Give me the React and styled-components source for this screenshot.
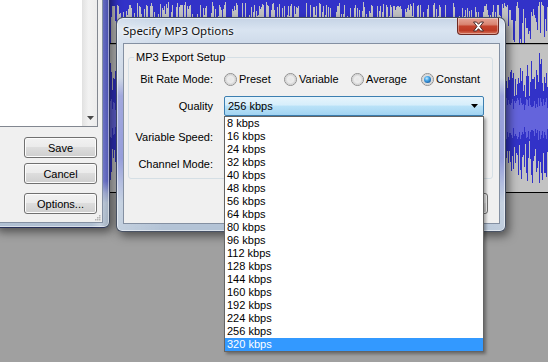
import React from 'react';
import styled, { createGlobalStyle } from 'styled-components';

const GlobalStyle = createGlobalStyle`
  html, body { margin: 0; padding: 0; }
  body {
    background: #a0a0a0;
    font-family: "Liberation Sans", Arial, sans-serif;
    font-size: 11px;
    color: #000;
  }
  * { box-sizing: border-box; }
`;

// small seeded random so the wave looks the same every run
const rng = (seed) => {
  let a = seed;
  return () => {
    a = (a + 0x6d2b79f5) | 0;
    let t = Math.imul(a ^ (a >>> 15), 1 | a);
    t = (t + Math.imul(t ^ (t >>> 7), 61 | t)) ^ t;
    return ((t ^ (t >>> 14)) >>> 0) / 4294967296;
  };
};

const makeTail = (w, h) => {
  const r = rng(11);
  let d = '';
  for (let x = 0; x < w; x++) {
    const len = r() < 0.12 ? 2 + r() * 4 : 5 + Math.pow(r(), 1.6) * (h - 3);
    d += `M${x + 0.5} 0V${len.toFixed(1)}`;
  }
  return d;
};

const makeWave = (w, h) => {
  const r = rng(29);
  const c = h / 2;
  let peak = '';
  let rms = '';
  for (let x = 0; x < w; x++) {
    const amp = 30 + 40 * Math.pow(r(), 0.55);
    const up = amp * (0.55 + 0.45 * r());
    const down = amp * (0.55 + 0.45 * r());
    const band = 8 + 13 * r();
    peak += `M${x + 0.5} ${(c - up).toFixed(1)}V${(c + down).toFixed(1)}`;
    rms += `M${x + 0.5} ${(c - band).toFixed(1)}V${(c + band).toFixed(1)}`;
  }
  return { peak, rms };
};

const TAIL = makeTail(548, 43);
const WAVE = makeWave(548, 147);

const RATES = [8, 16, 24, 32, 40, 48, 56, 64, 80, 96, 112, 128, 144, 160, 192, 224, 256, 320];

const Desktop = styled.div`
  position: relative;
  width: 548px;
  height: 362px;
  overflow: hidden;
  background: #a0a0a0;
`;

const TrackPanel = styled.div`
  display: flex;
  flex-direction: column;
  gap: 1px;
`;

const Track = styled.div`
  height: ${(p) => p.$h}px;
  background: #c2c2c2;
  border-bottom: 1px solid #000;
  svg { display: block; }
`;

const Frame = styled.div`
  position: absolute;
  left: ${(p) => p.$x}px;
  top: ${(p) => p.$y}px;
  width: ${(p) => p.$w}px;
  height: ${(p) => p.$h}px;
  display: flex;
  flex-direction: column;
  padding: ${(p) => p.$pad};
  border: 1px solid rgba(28, 38, 56, 0.75);
  border-radius: 7px 7px 6px 6px;
  background: ${(p) => p.$glass};
  box-shadow: inset 0 0 0 1px rgba(255, 255, 255, 0.5), 3px 4px 10px rgba(0, 0, 0, 0.5);
`;

const SaveClient = styled.div`
  flex: 1;
  display: flex;
  flex-direction: column;
  background: #f0f0f0;
  border-right: 1px solid rgba(60, 80, 110, 0.6);
  border-bottom: 1px solid rgba(60, 80, 110, 0.6);
`;

const FileArea = styled.div`
  display: flex;
  width: 98px;
  height: 127px;
  border-right: 1px solid #828790;
  border-bottom: 1px solid #828790;
`;

const FileList = styled.div`
  flex: 1;
  background: #fff;
`;

const ScrollBar = styled.div`
  width: 15px;
  display: flex;
  flex-direction: column;
  justify-content: flex-end;
  background: linear-gradient(90deg, #e4e4e4, #f2f2f2 40%, #ececec);
  border-left: 1px solid #e2e2e2;
`;

const ScrollArrow = styled.div`
  height: 17px;
  display: flex;
  align-items: center;
  justify-content: center;
`;

const ButtonColumn = styled.div`
  display: flex;
  flex-direction: column;
  margin-left: 24px;
`;

const Button = styled.div`
  width: ${(p) => p.$w}px;
  height: 21px;
  margin-top: ${(p) => p.$mt || 0}px;
  display: flex;
  align-items: center;
  justify-content: center;
  border: 1px solid #707070;
  border-radius: 3px;
  background: linear-gradient(180deg, #f2f2f2 0%, #ebebeb 45%, #dddddd 50%, #cfcfcf 100%);
  box-shadow: inset 0 0 0 1px #fcfcfc;
`;

const Grip = styled.svg`
  align-self: flex-end;
  margin: auto 1px 1px 0;
`;

const TitleBar = styled.div`
  height: 25px;
  flex-shrink: 0;
  display: flex;
  align-items: flex-start;
  justify-content: space-between;
`;

const TitleText = styled.span`
  margin-top: 5px;
  font-family: "Noto Sans", "Open Sans", sans-serif;
  font-size: 11.5px;
  line-height: 16px;
  color: #111;
  text-shadow: 0 0 6px #fff, 0 0 3px #fff;
`;

const CloseButton = styled.div`
  width: 42px;
  height: 17px;
  margin-right: 1px;
  display: flex;
  align-items: center;
  justify-content: center;
  border: 1px solid #6e2a22;
  border-top: none;
  border-radius: 0 0 4px 4px;
  background: linear-gradient(180deg, #e6a597 0%, #d98572 40%, #c4432d 52%, #bd3b25 78%, #d8765d 100%);
  box-shadow: inset 0 0 0 1px rgba(255, 255, 255, 0.35);
`;

const Client = styled.div`
  flex: 1;
  display: flex;
  flex-direction: column;
  background: #f0f0f0;
  border: 1px solid rgba(60, 80, 110, 0.6);
`;

const Group = styled.fieldset`
  margin: 6px 6px 0 4px;
  padding: 4px 0 3px 0;
  min-width: 0;
  border: 1px solid #d5dfe5;
  border-radius: 3px;
`;

const Caption = styled.legend`
  margin-left: 5px;
  padding: 0 2px;
  line-height: 14px;
`;

const Row = styled.div`
  display: flex;
  align-items: center;
  height: 22px;
  margin-top: ${(p) => p.$gap || 0}px;
`;

const Label = styled.div`
  width: 84px;
  flex-shrink: 0;
  margin-right: 11px;
  text-align: right;
`;

const RadioItem = styled.div`
  display: flex;
  align-items: center;
  gap: 2px;
  width: ${(p) => (p.$w ? `${p.$w}px` : 'auto')};
  flex-shrink: 0;
`;

const Radio = styled.span`
  position: relative;
  width: 13px;
  height: 13px;
  border-radius: 50%;
  border: 1px solid #8f8f8f;
  background: radial-gradient(circle at 50% 50%, #e6e6e6 0, #ececec 3px, #d4d4d4 5px, #f8f8f8 5.5px);

  &::after {
    content: "";
    display: ${(p) => (p.$on ? 'block' : 'none')};
    position: absolute;
    left: 2px;
    top: 2px;
    width: 7px;
    height: 7px;
    border-radius: 50%;
    background: radial-gradient(circle at 40% 35%, #c9ecff 0%, #4aa8e8 35%, #1a63a8 75%, #124a82 100%);
  }
`;

const ComboWrap = styled.div`
  position: relative;
  width: 260px;
`;

const Combo = styled.div`
  height: 20px;
  display: flex;
  align-items: center;
  padding-left: 3px;
  border: 1px solid #3c7fb1;
  border-radius: 2px;
  background: linear-gradient(180deg, #e6f4fc 0%, #d6eefb 45%, #bae2f8 50%, #a2d4f2 100%);
`;

const ComboArrow = styled.svg`
  margin-left: auto;
  margin-right: 5px;
`;

const DropList = styled.div`
  position: absolute;
  top: 100%;
  left: 0;
  width: 260px;
  z-index: 5;
  background: #fff;
  border: 1px solid #646464;
  box-shadow: 2px 2px 3px rgba(0, 0, 0, 0.35);
`;

const Item = styled.div`
  height: 13px;
  line-height: 13px;
  padding-left: 2px;
  white-space: nowrap;
  background: ${(p) => (p.$on ? '#3399ff' : 'transparent')};
  color: ${(p) => (p.$on ? '#fff' : '#000')};
`;

const ButtonRow = styled.div`
  display: flex;
  justify-content: flex-end;
  gap: 6px;
  margin: 14px 11px 0 0;
`;

const SAVE_GLASS =
  'linear-gradient(90deg, rgba(255,255,255,0) 85%, rgba(255,255,255,0.25) 92%, rgba(0,0,0,0.1)), linear-gradient(180deg, #4a52bb 0px, #4f57c0 120px, #5b63c6 210px, #98a5d2 222px, #b5c4d7 232px, #afbfd2 258px)';

const MP3_GLASS =
  'linear-gradient(90deg, rgba(255,255,255,0.22), rgba(255,255,255,0) 12%, rgba(255,255,255,0) 88%, rgba(255,255,255,0.18)), linear-gradient(180deg, #c5d3e5 0px, #d9e4f1 12px, #cfdbea 25px, #c3cfdf 60px, #8a93d6 78px, #7c86d2 140px, #a2afd8 165px, #b9c8da 185px, #b2c2d5 215px)';

const Wave = ({ kind }) =>
  kind === 'tail' ? (
    <svg width="548" height="43" shapeRendering="crispEdges">
      <path d={TAIL} stroke="#3232c8" strokeWidth="1" />
    </svg>
  ) : (
    <svg width="548" height="147" shapeRendering="crispEdges">
      <path d={WAVE.peak} stroke="#3232c8" strokeWidth="1" />
      <path d={WAVE.rms} stroke="#6464dc" strokeWidth="1" />
    </svg>
  );

const App = () => {
  return (
    <>
      <GlobalStyle />
      <Desktop>
        <TrackPanel>
          <Track $h={44}>
            <Wave kind="tail" />
          </Track>
          <Track $h={148}>
            <Wave kind="full" />
          </Track>
        </TrackPanel>

        <Frame $x={-7} $y={-30} $w={117} $h={258} $pad="29px 6px 6px 6px" $glass={SAVE_GLASS}>
          <SaveClient>
            <FileArea>
              <FileList />
              <ScrollBar>
                <ScrollArrow>
                  <svg width="7" height="4">
                    <path d="M0 0H7L3.5 4Z" fill="#4a4a4a" />
                  </svg>
                </ScrollArrow>
              </ScrollBar>
            </FileArea>
            <ButtonColumn>
              <Button $w={73} $mt={10}>Save</Button>
              <Button $w={73} $mt={5}>Cancel</Button>
              <Button $w={73} $mt={9}>Options...</Button>
            </ButtonColumn>
            <Grip width="7" height="7">
              <g fill="#b4b4b4">
                <rect x="5" y="1" width="1.5" height="1.5" />
                <rect x="3" y="3" width="1.5" height="1.5" />
                <rect x="5" y="3" width="1.5" height="1.5" />
                <rect x="1" y="5" width="1.5" height="1.5" />
                <rect x="3" y="5" width="1.5" height="1.5" />
                <rect x="5" y="5" width="1.5" height="1.5" />
              </g>
            </Grip>
          </SaveClient>
        </Frame>

        <Frame $x={116} $y={17} $w={390} $h={215} $pad="0 5px 7px 6px" $glass={MP3_GLASS}>
          <TitleBar>
            <TitleText>Specify MP3 Options</TitleText>
            <CloseButton>
              <svg width="13" height="11" viewBox="0 0 13 11">
                <path
                  d="M1.5 1H4.5L6.5 3.3L8.5 1H11.5L8 5.5L11.5 10H8.5L6.5 7.7L4.5 10H1.5L5 5.5Z"
                  fill="#fff"
                  stroke="#4a2a28"
                  strokeWidth="1"
                  strokeLinejoin="round"
                />
              </svg>
            </CloseButton>
          </TitleBar>
          <Client>
            <Group>
              <Caption>MP3 Export Setup</Caption>
              <Row>
                <Label>Bit Rate Mode:</Label>
                <RadioItem $w={60}><Radio />Preset</RadioItem>
                <RadioItem $w={67}><Radio />Variable</RadioItem>
                <RadioItem $w={70}><Radio />Average</RadioItem>
                <RadioItem><Radio $on />Constant</RadioItem>
              </Row>
              <Row $gap={5}>
                <Label>Quality</Label>
                <ComboWrap>
                  <Combo>
                    256 kbps
                    <ComboArrow width="7" height="4">
                      <path d="M0 0H7L3.5 4Z" fill="#000" />
                    </ComboArrow>
                  </Combo>
                  <DropList>
                    {RATES.map((r) => (
                      <Item key={r} $on={r === 320}>{r} kbps</Item>
                    ))}
                  </DropList>
                </ComboWrap>
              </Row>
              <Row $gap={9}>
                <Label>Variable Speed:</Label>
              </Row>
              <Row $gap={5}>
                <Label>Channel Mode:</Label>
              </Row>
            </Group>
            <ButtonRow>
              <Button $w={75} />
              <Button $w={75} />
            </ButtonRow>
          </Client>
        </Frame>
      </Desktop>
    </>
  );
};

export default App;
